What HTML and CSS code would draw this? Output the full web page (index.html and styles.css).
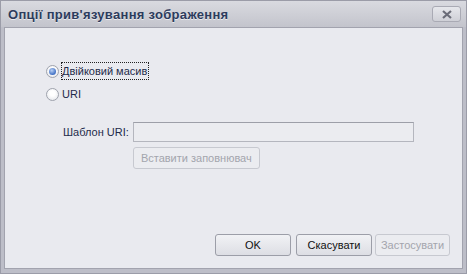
FILE: index.html
```html
<!DOCTYPE html>
<html lang="uk">
<head>
<meta charset="utf-8">
<title>Опції прив'язування зображення</title>
<link rel="stylesheet" href="styles.css">
</head>
<body>

<!-- ВІКНО ДІАЛОГУ -->
<div class="dialog">
  <div class="titlebar">
    <span class="title">Опції прив'язування зображення</span>
    <span class="close">
      <svg width="12" height="9" viewBox="0 0 12 9"><path d="M2 1 L10 8 M10 1 L2 8" stroke="#6a6c78" stroke-width="2.2"/></svg>
    </span>
  </div>

  <div class="panel">
    <div class="options">
      <label class="radio"><span class="dot on"></span><span class="focus">Двійковий масив</span></label>
      <label class="radio"><span class="dot"></span><span>URI</span></label>
    </div>

    <div class="uri">
      <span class="lbl">Шаблон URI:</span>
      <div class="col">
        <div class="field"></div>
        <div class="btn off">Вставити заповнювач</div>
      </div>
    </div>

    <div class="footer">
      <div class="btn">OK</div>
      <div class="btn">Скасувати</div>
      <div class="btn off">Застосувати</div>
    </div>
  </div>
</div>

</body>
</html>
```

FILE: styles.css
```css
/* --------- ЗАГАЛЬНЕ --------- */
*{box-sizing:border-box;margin:0;padding:0}
body{
  font-family:'Liberation Sans',Arial,sans-serif;
  font-size:11px;
  color:#1e2a4a;
  background:#fff;
  white-space:nowrap;
}

/* --------- ВІКНО --------- */
.dialog{
  width:467px;
  height:274px;
  background:#bdbec8;
  border:1px solid #9b9ca8;
  display:flex;
  flex-direction:column;
  padding:0 3px 4px;
}
.titlebar{
  height:26px;
  display:flex;
  align-items:center;
  justify-content:space-between;
  background:linear-gradient(#d9dae0,#c3c4cc);
  margin:0 -3px;
  padding:0 5px 0 7px;
}
.title{
  font-weight:bold;
  font-size:13px;
  letter-spacing:.3px;
  color:#2c3b5d;
  text-shadow:0 1px 0 rgba(255,255,255,.6);
}
.close{
  width:29px;
  height:16px;
  border:1px solid #a9aab4;
  border-radius:3px;
  background:linear-gradient(#e6e7ec,#cfd0d7);
  display:flex;
  align-items:center;
  justify-content:center;
}

/* --------- ПАНЕЛЬ --------- */
.panel{
  flex:1;
  background:#e9eaef;
  border:1px solid #a2a3ae;
  display:flex;
  flex-direction:column;
  padding:34px 0 0 41px;
}
.options{display:flex;flex-direction:column;gap:5px}
.radio{display:flex;align-items:center;gap:3px;height:18px}
.dot{
  width:13px;height:13px;border-radius:50%;
  border:1px solid #9fa3ad;
  background:radial-gradient(circle at 50% 40%,#fff 30%,#dfe1e6 100%);
  position:relative;
}
.dot.on::after{
  content:'';
  position:absolute;left:2px;top:2px;
  width:7px;height:7px;border-radius:50%;
  background:radial-gradient(circle at 40% 35%,#b9d1f5,#3f6fc4 70%);
}
.focus{outline:1px dotted #222;padding:1px 1px 1px 0;line-height:14px}

.uri{display:flex;margin-top:19px;padding-left:17px;gap:4px}
.lbl{line-height:20px;color:#1e2a4a}
.col{display:flex;flex-direction:column;gap:5px}
.field{
  width:281px;height:20px;
  background:#ebecf0;
  border:1px solid #b4b6be;
  border-top-color:#9d9fa8;
}

/* --------- КНОПКИ --------- */
.btn{
  height:22px;
  border:1px solid #9c9ea8;
  border-radius:3px;
  background:linear-gradient(#f1f2f5,#dddee4);
  text-align:center;
  line-height:20px;
  color:#111;
}
.btn.off{
  color:#a3a5ad;
  border-color:#c7c9d0;
  background:#ebecf0;
}
.col .btn{width:127px}
.footer{
  margin-top:auto;
  display:flex;
  justify-content:flex-end;
  padding:0 12px 12px 0;
}
.footer .btn{width:76px;margin-left:5px}
.footer .btn.off{width:75px;margin-left:3px}
```
